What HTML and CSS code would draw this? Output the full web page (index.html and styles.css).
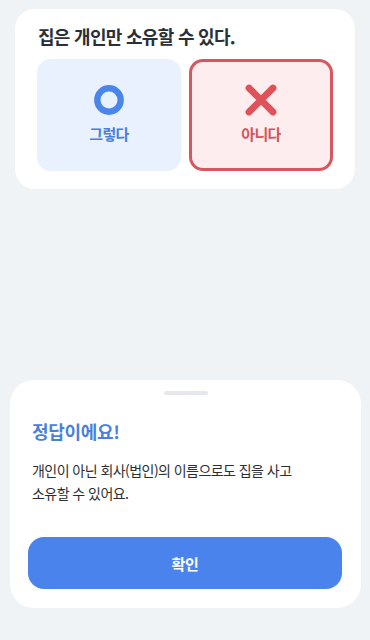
FILE: index.html
```html
<!DOCTYPE html>
<html lang="ko">
<head>
<meta charset="utf-8">
<meta name="viewport" content="width=device-width, initial-scale=1">
<title>퀴즈</title>
<link rel="stylesheet" href="styles.css">
</head>
<body>
<div class="page">
  <section class="quiz-card">
    <h1 class="question">집은 개인만 소유할 수 있다.</h1>
    <div class="choices">
      <button class="choice choice-o" type="button">
        <svg class="icon" width="32" height="32" viewBox="0 0 32 32" aria-hidden="true">
          <circle cx="16" cy="16" r="11.7" fill="none" stroke="#4a86ea" stroke-width="6.4"/>
        </svg>
        <span class="choice-label">그렇다</span>
      </button>
      <button class="choice choice-x selected" type="button">
        <svg class="icon" width="32" height="32" viewBox="0 0 32 32" aria-hidden="true">
          <path d="M4 4 L28 28 M28 4 L4 28" fill="none" stroke="#e0525a" stroke-width="6.8" stroke-linecap="round"/>
        </svg>
        <span class="choice-label">아니다</span>
      </button>
    </div>
  </section>

  <section class="sheet">
    <div class="handle"></div>
    <div class="sheet-body">
      <h2 class="result">정답이에요!</h2>
      <p class="explain">개인이 아닌 회사(법인)의 이름으로도 집을 사고<br>소유할 수 있어요.</p>
    </div>
    <button class="confirm" type="button">확인</button>
  </section>
</div>
</body>
</html>
```

FILE: styles.css
```css
* { box-sizing: border-box; }

html, body {
  margin: 0;
  padding: 0;
}

body {
  background: #f0f3f5;
  font-family: "Noto Sans CJK KR", "Noto Sans", sans-serif;
  color: #222;
}

.page {
  min-height: 640px;
  display: flex;
  flex-direction: column;
  padding: 9px 0 32px;
}

.quiz-card {
  margin: 0 15px;
  background: #fff;
  border-radius: 20px;
  padding: 15px 22px 18px;
}

.question {
  margin: 0 0 11px;
  padding-left: 1px;
  font-size: 18px;
  line-height: 24px;
  font-weight: 700;
  color: #2b2f36;
  letter-spacing: -0.7px;
}

.choices {
  display: grid;
  grid-template-columns: 1fr 1fr;
  gap: 8px;
}

.choice {
  height: 112px;
  border: 3px solid transparent;
  border-radius: 14px;
  display: flex;
  flex-direction: column;
  align-items: center;
  justify-content: center;
  gap: 8px;
  padding: 0 0 2px;
  font-family: inherit;
  cursor: pointer;
}

.choice-o {
  background: #e8f1fd;
  border-color: #e8f1fd;
}

.choice-x {
  background: #fdedee;
  border-color: #d6575d;
}

.icon {
  display: block;
}

.choice-label {
  font-size: 15px;
  line-height: 20px;
  font-weight: 700;
  letter-spacing: -0.7px;
}

.choice-o .choice-label { color: #4a7fd9; }
.choice-x .choice-label { color: #d3555b; }

.sheet {
  margin: auto 9px 0 10px;
  background: #fff;
  border-radius: 24px;
  padding: 11px 19px 19px 18px;
  display: flex;
  flex-direction: column;
}

.handle {
  align-self: center;
  width: 44px;
  height: 4px;
  border-radius: 2px;
  background: #e4e7eb;
  margin-left: 2px;
}

.sheet-body {
  padding: 24px 4px 0;
}

.result {
  margin: 0 0 16px;
  font-size: 18px;
  line-height: 24px;
  font-weight: 700;
  color: #4a80dc;
  letter-spacing: -0.3px;
}

.explain {
  margin: 0;
  font-size: 14px;
  line-height: 23px;
  color: #2b2f34;
  letter-spacing: -0.55px;
}

.confirm {
  margin-top: 32px;
  height: 52px;
  border: none;
  border-radius: 16px;
  background: #4a83eb;
  color: #fff;
  font-family: inherit;
  font-size: 15px;
  font-weight: 700;
  letter-spacing: -0.2px;
  cursor: pointer;
}
```
